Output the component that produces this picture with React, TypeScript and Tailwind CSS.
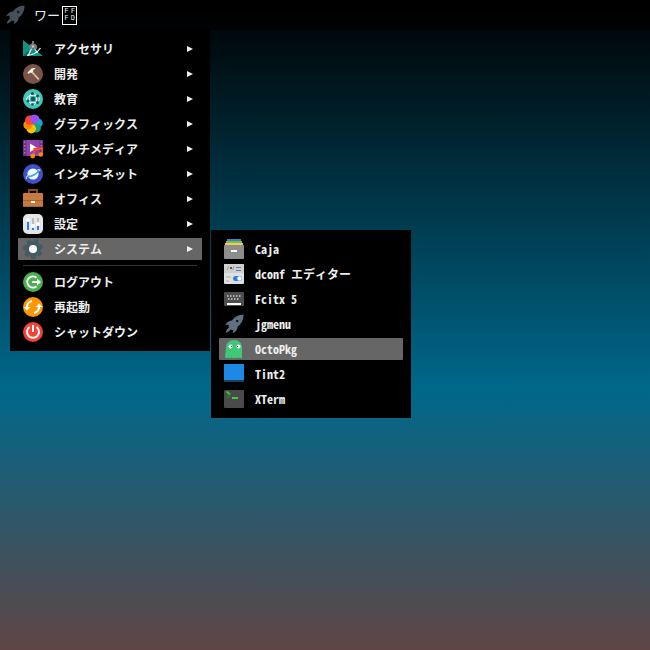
import type { ReactNode } from "react";

type Entry = { label: string; icon: ReactNode };

function Icon({ children }: { children: ReactNode }) {
  return (
    <svg viewBox="0 0 20 20" className="size-5 shrink-0" aria-hidden="true">
      {children}
    </svg>
  );
}

function Rocket({ color }: { color: string }) {
  return (
    <Icon>
      <path
        fill={color}
        d="M19.6.6C14.5.7 10.5 3 8 6.600 5 6.300 2.700 8.500 1 11.600c1.500-.8 2.600-.9 3.900-.5L4.200 12.400l1.200 1.200C3.400 14.500 2.300 16.500 1.600 18.700c2.200-.5 4.300-1.500 5.200-3.400l1.100 1 1.200-.5c.3 1.200.1 2.200-.4 3.500 3.200-1.500 5-3.800 4.900-6.700C17.300 10.300 19.500 6 19.600.6Z"
      />
      <circle cx="13.200" cy="7" r="1.300" fill="#141a1e" />
    </Icon>
  );
}

const petals: [number, string][] = [
  [20, "#9c4df0"],
  [80, "#12a5e0"],
  [140, "#16a37b"],
  [200, "#ffc400"],
  [260, "#ff8a00"],
  [320, "#fb4436"],
];

const categories: Entry[] = [
  {
    label: "アクセサリ",
    icon: (
      <Icon>
        <path fill="#0b9384" d="M0 1 20 17H0Z" />
        <path fill="#00695c" d="M0 17 5 12l5 5Z" />
        <path d="M8.800 9 5 17M11.200 9l3.300 5" stroke="#e8e8e8" strokeWidth="1.300" fill="none" />
        <path d="M4 16.200c6 .2 10-2.200 13.500-7.200" stroke="#f1f1f1" strokeWidth="1.300" fill="none" />
        <path fill="#757b80" d="M9 2h2v2.500a3.400 3.400 0 0 1 2 6L11 9.500H9l-2 1a3.400 3.400 0 0 1 2-6Z" />
        <circle cx="10" cy="7.500" r="1.200" fill="#c4c4c4" />
      </Icon>
    ),
  },
  {
    label: "開発",
    icon: (
      <Icon>
        <circle cx="10" cy="10" r="10" fill="#795548" />
        <path d="m8.500 7.500 6.800 7.300" stroke="#d7bdb0" strokeWidth="1.800" strokeLinecap="round" />
        <path fill="#f5f5f5" d="M4.300 8.700 8.500 4.600c1-.7 2.400-.7 4.200-.2l-2.600 1.500.3 1.300-2.200 1.900-1.100-.5-1.500 1.500Z" />
      </Icon>
    ),
  },
  {
    label: "教育",
    icon: (
      <Icon>
        <circle cx="10" cy="10" r="10" fill="#3cc8bb" />
        <g fill="none" stroke="#e4f6f4" strokeWidth="1">
          <ellipse cx="10" cy="10" rx="6.500" ry="3.700" />
          <ellipse cx="10" cy="10" rx="3.700" ry="6" />
        </g>
        <circle cx="10" cy="10" r="2.300" fill="#37474f" />
        <g fill="#37474f">
          <circle cx="9.500" cy="4.500" r="1.600" />
          <circle cx="14.500" cy="7" r="1.500" />
          <circle cx="5" cy="12" r="1.500" />
          <circle cx="14.500" cy="13.500" r="1.500" />
          <circle cx="9.500" cy="15.500" r="1.300" />
        </g>
      </Icon>
    ),
  },
  {
    label: "グラフィックス",
    icon: (
      <Icon>
        {petals.map(([angle, fill]) => (
          <circle key={angle} cx="10" cy="5" r="4.700" fill={fill} transform={`rotate(${angle} 10 10)`} />
        ))}
        <path fill="#9c4df0" d="M8 1.600C11 .5 15 1 16 4c.2 2-.8 3.600-2.200 4.500L10 10C7.600 8 6.500 4 8 1.600Z" />
      </Icon>
    ),
  },
  {
    label: "マルチメディア",
    icon: (
      <Icon>
        <path fill="#8e44ad" d="M0 1h20v16H0Z" />
        <path fill="#6b2f88" d="M0 1h3.500v16H0ZM16.500 1H20v16h-3.500Z" />
        <path
          fill="#b36bd0"
          d="M1 2.500h1.500V4H1ZM1 6h1.500v1.500H1ZM1 9.500h1.500V11H1ZM1 13h1.500v1.500H1ZM17.500 2.500H19V4h-1.500ZM17.500 6H19v1.500h-1.500Z"
        />
        <path fill="#fff" d="M7 4.500 14 8.800 7 13Z" />
        <path fill="#f4511e" d="M10.500 9 20 8v2.500l-8 1V17h-1.500ZM18.500 9H20v6.500h-1.500Z" />
        <circle cx="9.700" cy="17" r="2.400" fill="#fb8c00" />
        <circle cx="17.700" cy="15.500" r="2.300" fill="#fb8c00" />
      </Icon>
    ),
  },
  {
    label: "インターネット",
    icon: (
      <Icon>
        <circle cx="10" cy="10" r="10" fill="#3f51c6" />
        <circle cx="10" cy="10" r="5.600" fill="#f4fbff" />
        <path d="M4.800 12C7 13.500 14 10 15.300 7" stroke="#38a9ee" strokeWidth="1.700" fill="none" />
        <path d="M5 11.300c-2 2-2.300 3.300-1 3.400M14.200 6.200c2.300-1 3.400-.8 2.300 1" stroke="#b9dffa" strokeWidth="1.100" fill="none" />
      </Icon>
    ),
  },
  {
    label: "オフィス",
    icon: (
      <Icon>
        <path d="M6 5V1h8v4" stroke="#8a4b1c" strokeWidth="2" fill="none" />
        <rect y="4" width="20" height="14" rx="1" fill="#c47a41" />
        <path fill="#a86230" d="M0 11h20v1H0ZM0 17h20v1H0Z" />
        <rect x="8" y="12" width="4" height="2" rx=".5" fill="#fff" />
      </Icon>
    ),
  },
  {
    label: "設定",
    icon: (
      <Icon>
        <rect width="20" height="20" rx="5" fill="#e6e6e6" />
        <path d="M5 6v10M10 11v5M15 10v6" stroke="#2f80e0" strokeWidth="2" />
        <path d="M10 4v7M15 4v6" stroke="#bdbdbd" strokeWidth="2" />
        <g fill="#fff">
          <circle cx="5" cy="6" r="2" />
          <circle cx="10" cy="12" r="2" />
          <circle cx="15" cy="10" r="2" />
        </g>
      </Icon>
    ),
  },
  {
    label: "システム",
    icon: (
      <Icon>
        <circle cx="10" cy="10" r="7.800" fill="#455a64" />
        {[22, 74, 125, 177, 228, 280, 331].map((angle) => (
          <rect key={angle} x="7.500" y="0" width="5" height="5" rx="1.500" fill="#455a64" transform={`rotate(${angle} 10 10)`} />
        ))}
        <circle cx="10" cy="10" r="4" fill="#fff" />
      </Icon>
    ),
  },
];

const sessionActions: Entry[] = [
  {
    label: "ログアウト",
    icon: (
      <Icon>
        <circle cx="10" cy="10" r="10" fill="#4caf50" />
        <path d="M13.500 5.700A5.600 5.600 0 1 0 13.500 14.300" stroke="#fff" strokeWidth="2" fill="none" />
        <path fill="#fff" d="M9 9h5V6.500L18 10l-4 3.500V11H9Z" />
      </Icon>
    ),
  },
  {
    label: "再起動",
    icon: (
      <Icon>
        <circle cx="10" cy="10" r="10" fill="#ff9800" />
        <path d="M4 10.500A6.200 6.200 0 0 1 9 4M16 9.500A6.200 6.200 0 0 1 11 16" stroke="#fff" strokeWidth="2.200" fill="none" />
        <path fill="#fff" d="M.5 10h7L4 13.500ZM12.500 10h7L16 6.500Z" />
      </Icon>
    ),
  },
  {
    label: "シャットダウン",
    icon: (
      <Icon>
        <circle cx="10" cy="10" r="10" fill="#f44336" />
        <path d="M6.500 5a6 6 0 1 0 7 0M10 3v7" stroke="#fff" strokeWidth="2" fill="none" />
      </Icon>
    ),
  },
];

const systemApps: Entry[] = [
  {
    label: "Caja",
    icon: (
      <Icon>
        <path fill="#3f7fd6" d="M3 0h14v2H3Z" />
        <path fill="#6cc644" d="M2 2h16v2H2Z" />
        <path fill="#ffc84a" d="M1 4h18v2H1Z" />
        <rect y="6" width="20" height="14" rx="1" fill="#8d8d8d" />
        <path fill="#fff" d="M7 11h6v2H7Z" />
      </Icon>
    ),
  },
  {
    label: "dconf エディター",
    icon: (
      <Icon>
        <rect width="20" height="20" rx="1" fill="#e0e0e0" />
        <path fill="#cfcfcf" d="M0 0h20v9H0Z" />
        <path d="m3 6 1.500-3.500M8.500 6 10 2.500" stroke="#8a8a8a" strokeWidth=".8" />
        <path fill="#555" d="M6 3h2v2H6Z" />
        <path fill="#777" d="M12 3h5v1h-5Z" />
        <path fill="#2f80e0" d="M12 6h5v1h-5Z" />
        <path fill="#c8c8c8" d="M2 12h5v2H2ZM2 16h3v2H2Z" />
        <rect x="9" y="12" width="9" height="5" rx="2.500" fill="#2f80e0" />
        <circle cx="15.500" cy="14.500" r="2.200" fill="#fff" />
      </Icon>
    ),
  },
  {
    label: "Fcitx 5",
    icon: (
      <Icon>
        <rect y="3" width="20" height="14" rx="1" fill="#4d4d4d" />
        <path d="M3 7h14" stroke="#d0d0d0" strokeWidth="1.500" strokeDasharray="1.500 1.500" />
        <path d="M4 10h12" stroke="#d0d0d0" strokeWidth="1.500" strokeDasharray="1.500 1.500" />
        <path fill="#fff" d="M3 14h14v2H3Z" />
      </Icon>
    ),
  },
  { label: "jgmenu", icon: <Rocket color="#607080" /> },
  {
    label: "OctoPkg",
    icon: (
      <Icon>
        <path
          fill="#3ec878"
          d="M2 8a8 7 0 0 1 16 0v10.500l-1 1-1.500-1-1.500 1-1.500-1-1.500 1-1-1-1 1-1.500-1-1.500 1-1.500-1-1.500 1-2-1Z"
        />
        <circle cx="6.500" cy="7.500" r="2" fill="#fff" />
        <circle cx="14.500" cy="7.500" r="2" fill="#fff" />
        <path fill="#444" d="M7 7h1v1H7ZM13 7h1v1h-1Z" />
      </Icon>
    ),
  },
  {
    label: "Tint2",
    icon: (
      <Icon>
        <path fill="#1e88e5" d="M0 0h20v16H0Z" />
        <path fill="#1f3c5b" d="M0 16h20v2H0Z" />
      </Icon>
    ),
  },
  {
    label: "XTerm",
    icon: (
      <Icon>
        <rect y="1" width="20" height="18" rx="1" fill="#4a4a4a" />
        <path d="m2.500 2.500 4 3.300" stroke="#3ac43a" strokeWidth="1.800" fill="none" />
        <path d="m6.500 5.300-4 4" stroke="#208a2a" strokeWidth="1.500" fill="none" />
        <path fill="#3ecb3e" d="M8 8h6v2H8Z" />
      </Icon>
    ),
  },
];

function MenuItem({ entry, active = false, hasSubmenu = false }: { entry: Entry; active?: boolean; hasSubmenu?: boolean }) {
  return (
    <button
      type="button"
      role="menuitem"
      aria-haspopup={hasSubmenu ? "menu" : undefined}
      className={`flex h-[22px] w-full items-center gap-[11px] rounded-[1px] pr-[9px] pl-[5px] text-left ${active ? "bg-[#666666]" : ""}`}
    >
      {entry.icon}
      <span className="flex-1 whitespace-nowrap">{entry.label}</span>
      {hasSubmenu && (
        <svg viewBox="0 0 6 6" className="size-1.5 shrink-0 fill-current" aria-hidden="true">
          <path d="M0 0 6 3 0 6Z" />
        </svg>
      )}
    </button>
  );
}

export default function App() {
  return (
    <div className="flex min-h-screen flex-col bg-[linear-gradient(to_bottom,#000000_0%,#00688b_60%,#604545_100%)] font-['Noto_Sans_Mono_CJK_JP','Noto_Sans_CJK_JP',monospace] text-[#eeeeee]">
      <header className="flex h-[30px] items-center bg-black/75 px-[5px]">
        <button type="button" aria-label="メニュー">
          <Rocket color="#46505a" />
        </button>
        <span className="ml-[9px] text-[13px] leading-5">ワー</span>
        <span className="ml-0.5 grid h-[19px] w-[15px] grid-cols-2 place-items-center border border-white py-px font-['DejaVu_Sans_Mono',monospace] text-[7px] leading-[7px]">
          <span>F</span>
          <span>F</span>
          <span>F</span>
          <span>D</span>
        </span>
      </header>

      <main className="flex-1 px-2.5">
        <ul role="menu" className="flex w-[200px] flex-col gap-[3px] bg-black p-2 text-[12px] leading-[18px] font-bold">
          {categories.map((entry) => {
            const open = entry.label === "システム";
            return (
              <li key={entry.label} role="none" className="relative">
                <MenuItem entry={entry} active={open} hasSubmenu />
                {open && (
                  <ul role="menu" className="absolute -top-2 left-full ml-[9px] flex w-[200px] flex-col gap-[3px] bg-black p-2">
                    {systemApps.map((app) => (
                      <li key={app.label} role="none">
                        <MenuItem entry={app} active={app.label === "OctoPkg"} />
                      </li>
                    ))}
                  </ul>
                )}
              </li>
            );
          })}
          <li role="separator" className="mx-[5px] my-0.5 h-px bg-[#333333]" />
          {sessionActions.map((entry) => (
            <li key={entry.label} role="none">
              <MenuItem entry={entry} />
            </li>
          ))}
        </ul>
      </main>
    </div>
  );
}
